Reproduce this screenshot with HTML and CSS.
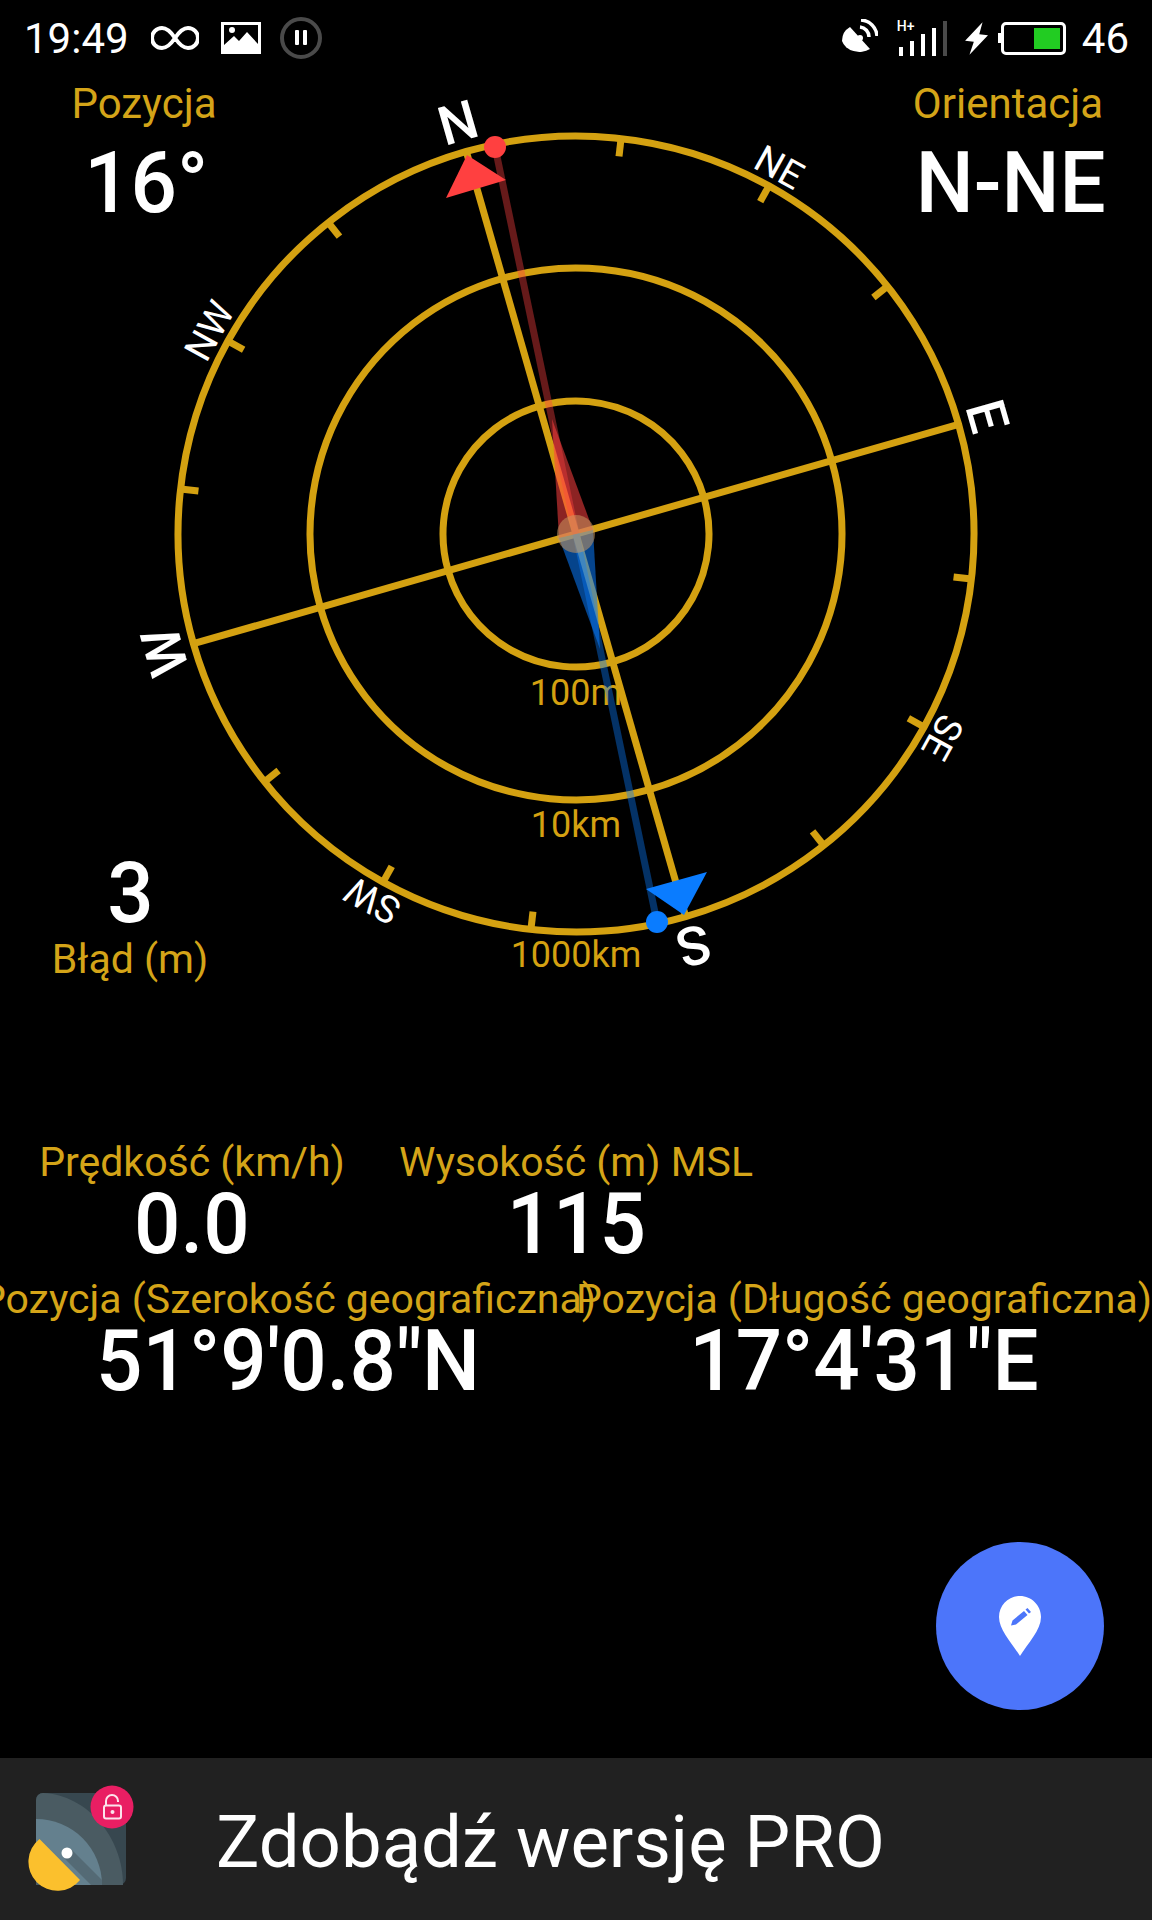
FILE: index.html
```html
<!DOCTYPE html>
<html lang="pl">
<head>
    <meta charset="UTF-8">
    <meta name="viewport" content="width=device-width, initial-scale=1.0">
    <title>Kompas GPS</title>
    <link rel="stylesheet" href="styles.css">
</head>
<body>
<div class="screen">

    <!-- compass dial, drawn in screen coordinates, centre 576,534 -->
    <svg class="compass" viewBox="0 0 1152 1000" width="1152" height="1000">
        <g class="dial" transform="rotate(-16 576 534)">
            <circle cx="576" cy="534" r="398"/>
            <circle cx="576" cy="534" r="266"/>
            <circle cx="576" cy="534" r="133"/>
            <line x1="576" y1="136" x2="576" y2="932"/>
            <line x1="178" y1="534" x2="974" y2="534"/>
            <g id="ticks"></g>
            <g class="dir-big">
                <text x="576" y="125">N</text>
                <text x="576" y="125" transform="rotate(90 576 534)">E</text>
                <text x="576" y="125" transform="rotate(180 576 534)">S</text>
                <text x="576" y="125" transform="rotate(270 576 534)">W</text>
            </g>
            <g class="dir-small">
                <text x="576" y="128" transform="rotate(45 576 534)">NE</text>
                <text x="576" y="128" transform="rotate(135 576 534)">SE</text>
                <text x="576" y="128" transform="rotate(225 576 534)">SW</text>
                <text x="576" y="128" transform="rotate(315 576 534)">NW</text>
            </g>
        </g>
        <g class="scale">
            <text x="576" y="705">100m</text>
            <text x="576" y="837">10km</text>
            <text x="576" y="967">1000km</text>
        </g>
        <!-- gps needle -->
        <line class="needle-red" x1="495" y1="147" x2="576" y2="534"/>
        <line class="needle-blue" x1="657" y1="922" x2="576" y2="534"/>
        <polygon class="wedge-red" points="552,419 559,538 593,530"/>
        <polygon class="wedge-blue" points="600,649 593,530 559,538"/>
        <circle class="hub" cx="576" cy="534" r="19"/>
        <circle class="dot-red" cx="495" cy="147" r="11"/>
        <circle class="dot-blue" cx="657" cy="922" r="11"/>
        <polygon class="dot-red" points="467,155 506,180 446,198"/>
        <polygon class="dot-blue" points="646,889 707,872 684,915"/>
    </svg>

    <div class="statusbar">
        <div class="status-left">
            <span class="clock">19:49</span>
            <svg class="icon-inf" viewBox="0 0 48 24" width="48" height="24">
                <path d="M24 12C20 6 16 2 11 2a10 10 0 0 0 0 20c5 0 9-4 13-10s8-10 13-10a10 10 0 0 1 0 20c-5 0-9-4-13-10z"/>
            </svg>
            <svg class="icon-pic" viewBox="0 0 40 32" width="40" height="32">
                <path fill-rule="evenodd" d="M0 0h40v32H0zM3 3v20l10-9 5 5 8-9 11 12V3z"/>
                <circle cx="11" cy="8" r="3"/>
            </svg>
            <svg class="icon-pause" viewBox="0 0 42 42" width="42" height="42">
                <circle cx="21" cy="21" r="19"/>
                <rect x="15" y="13" width="4" height="15" rx="1"/>
                <rect x="23" y="13" width="4" height="15" rx="1"/>
            </svg>
        </div>
        <div class="status-right">
            <svg class="icon-sat" viewBox="0 0 38 38" width="38" height="38">
                <path d="M10 8 30 30A18 15 0 0 1 2 22 16 16 0 0 1 10 8z"/>
                <path class="sat-wave" d="M20 8a10 10 0 0 1 9 10M21 1a17 17 0 0 1 16 16"/>
                <circle cx="20" cy="19" r="3"/>
            </svg>
            <div class="signal">
                <span class="hplus">H+</span>
                <i class="bar b1"></i>
                <i class="bar b2"></i>
                <i class="bar b3"></i>
                <i class="bar b4"></i>
                <i class="bar b5"></i>
            </div>
            <svg class="icon-bolt" viewBox="0 0 22 30" width="24" height="33">
                <path d="M17 0 1 17l8 1-4 12L22 12l-8-1z"/>
            </svg>
            <div class="battery"><div class="battery-fill"></div></div>
            <span class="clock">46</span>
        </div>
    </div>

    <div class="heading-row">
        <div class="heading">
            <div class="label">Pozycja</div>
            <div class="value">16°</div>
        </div>
        <div class="heading">
            <div class="label">Orientacja</div>
            <div class="value">N-NE</div>
        </div>
    </div>

    <div class="error-box">
        <div class="value">3</div>
        <div class="label">Błąd (m)</div>
    </div>

    <div class="stats">
        <div class="stat">
            <div class="label">Prędkość (km/h)</div>
            <div class="value">0.0</div>
        </div>
        <div class="stat">
            <div class="label">Wysokość (m) MSL</div>
            <div class="value">115</div>
        </div>
    </div>

    <div class="coords">
        <div class="stat">
            <div class="label">Pozycja (Szerokość geograficzna)</div>
            <div class="value">51°9'0.8"N</div>
        </div>
        <div class="stat">
            <div class="label">Pozycja (Długość geograficzna)</div>
            <div class="value">17°4'31"E</div>
        </div>
    </div>

    <div class="fab-row">
        <div class="fab">
            <svg viewBox="0 0 42 60" width="42" height="60">
                <path fill="#fff" d="M21 0C9.400 0 0 9.400 0 21c0 13 13 26 21 39 8-13 21-26 21-39C42 9.400 32.600 0 21 0z"/>
                <path fill="#4c75fa" d="M12 29.500l1.500-5L25 15l3.500 4L17 28.500zM26.500 13.500l2-1.600 3.500 4-2 1.600z"/>
            </svg>
        </div>
    </div>

    <div class="promo">
        <svg class="promo-icon" viewBox="0 0 140 130" width="140" height="130">
            <rect x="36" y="27" width="90" height="92" rx="7" fill="#37474f"/>
            <path d="M36 34a7 7 0 0 1 7-7c44 2 80 44 80 92H36z" fill="#4a5b62"/>
            <path d="M36 53A66 66 0 0 1 102 119H43a7 7 0 0 1-7-7z" fill="#64808e"/>
            <path d="M63 91l8-8 31 31v5H91z" fill="#546a75"/>
            <path d="M39.500 73 80 114A29 29 0 1 1 39.500 73z" fill="#fbc02d"/>
            <circle cx="67" cy="87" r="5.500" fill="#fff"/>
            <circle cx="112" cy="41" r="21.500" fill="#e91e63"/>
            <path d="M106 39v-4a6 6 0 0 1 12 0v1" fill="none" stroke="#fce4ec" stroke-width="2"/>
            <rect x="104" y="39.500" width="17" height="13" rx="2" fill="none" stroke="#fce4ec" stroke-width="2"/>
            <circle cx="112.500" cy="46" r="2" fill="#fce4ec"/>
        </svg>
        <span class="promo-text">Zdobądź wersję PRO</span>
    </div>
</div>

<script>
    // tick marks every 22.5 degrees, cardinal points have none
    var ticks = document.getElementById("ticks");
    for (var i = 0; i < 16; i++) {
        if (i % 4 === 0) continue;
        var tick = document.createElementNS("http://www.w3.org/2000/svg", "line");
        tick.setAttribute("x1", 576);
        tick.setAttribute("y1", 136);
        tick.setAttribute("x2", 576);
        tick.setAttribute("y2", 154);
        tick.setAttribute("transform", "rotate(" + (i * 22.5) + " 576 534)");
        ticks.appendChild(tick);
    }
</script>
</body>
</html>
```

FILE: styles.css
```css
html {
    margin: 0px;
}
body {
    margin: 0px;
    background-color: #000000;
    font-family: "Roboto", "Liberation Sans", sans-serif;
}
.screen {
    position: relative;
    display: flex;
    flex-direction: column;
    width: 1152px;
    height: 1920px;
    overflow: hidden;
    background-color: #000000;
    color: #ffffff;
}

/* compass */
.compass {
    position: absolute;
    left: 0;
    top: 0;
}
.dial circle {
    fill: none;
    stroke: #d4a111;
    stroke-width: 7;
}
.dial line {
    stroke: #d4a111;
    stroke-width: 7;
}
.dir-big text {
    fill: #ffffff;
    font-size: 54px;
    font-weight: 500;
    text-anchor: middle;
}
.dir-small text {
    fill: #ffffff;
    font-size: 38px;
    text-anchor: middle;
}
.scale text {
    fill: #d4a111;
    font-size: 36px;
    text-anchor: middle;
}
.needle-red {
    stroke: #ff4040;
    stroke-opacity: 0.4;
    stroke-width: 7;
}
.needle-blue {
    stroke: #0a7cff;
    stroke-opacity: 0.4;
    stroke-width: 7;
}
.wedge-red {
    fill: #ff4040;
    fill-opacity: 0.55;
}
.wedge-blue {
    fill: #0a7cff;
    fill-opacity: 0.55;
}
.hub {
    fill: #c89860;
    fill-opacity: 0.55;
}
.dot-red {
    fill: #ff4040;
}
.dot-blue {
    fill: #0a7cff;
}

/* status bar */
.statusbar {
    display: flex;
    justify-content: space-between;
    align-items: center;
    height: 80px;
    padding: 0px 23px 4px 24px;
    box-sizing: border-box;
    flex: none;
}
.status-left, .status-right {
    display: flex;
    align-items: center;
}
.clock {
    font-size: 42px;
}
.icon-inf {
    margin-left: 22px;
    fill: none;
    stroke: #ffffff;
    stroke-width: 4;
}
.icon-pic {
    margin-left: 22px;
    fill: #ffffff;
}
.icon-pause {
    margin-left: 19px;
    fill: #ffffff;
}
.icon-pause circle {
    fill: none;
    stroke: #4a4a4a;
    stroke-width: 4;
}
.icon-sat {
    fill: #ffffff;
}
.sat-wave {
    fill: none;
    stroke: #ffffff;
    stroke-width: 3.5;
}
.signal {
    position: relative;
    display: flex;
    align-items: flex-end;
    gap: 7px;
    height: 35px;
    margin-left: 21px;
}
.hplus {
    position: absolute;
    left: -2px;
    top: -2px;
    font-size: 14px;
    font-weight: 500;
    line-height: 14px;
}
.bar {
    display: block;
    width: 4px;
    background-color: #ffffff;
}
.b1 { height: 9px; }
.b2 { height: 15px; }
.b3 { height: 22px; }
.b4 { height: 28px; }
.b5 { height: 35px; background-color: #4a4a4a; }
.icon-bolt {
    margin-left: 17px;
    fill: #ffffff;
}
.battery {
    position: relative;
    display: flex;
    justify-content: flex-end;
    width: 65px;
    height: 33px;
    margin-left: 13px;
    padding: 3px;
    box-sizing: border-box;
    border: 3px solid #ffffff;
    border-radius: 5px;
}
.battery::before {
    content: "";
    position: absolute;
    left: -6px;
    top: 8px;
    width: 3px;
    height: 10px;
    background-color: #ffffff;
}
.battery-fill {
    width: 26px;
    background-color: #22cc22;
}
.status-right .clock {
    margin-left: 16px;
}

/* readouts */
.label {
    font-size: 41px;
    line-height: 48px;
    color: #d4a418;
    white-space: nowrap;
}
.value {
    font-size: 86px;
    font-weight: 500;
    line-height: 80px;
    white-space: nowrap;
    transform: scaleX(0.95);
}
.heading-row {
    display: flex;
    justify-content: space-between;
    flex: none;
}
.heading {
    display: flex;
    flex-direction: column;
    align-items: center;
    width: 288px;
}
.heading .label {
    font-size: 42px;
}
.heading .value {
    margin-top: 15px;
    padding-left: 5px;
}
.error-box {
    display: flex;
    flex-direction: column;
    align-items: center;
    width: 260px;
    margin-top: 630px;
    flex: none;
}
.error-box .label {
    margin-top: 2px;
}
.stats {
    display: grid;
    grid-template-columns: 384px 384px 384px;
    margin-top: 155px;
    flex: none;
}
.coords {
    display: grid;
    grid-template-columns: 576px 576px;
    margin-top: 11px;
    flex: none;
}
.stat {
    display: flex;
    flex-direction: column;
    align-items: center;
    min-width: 0;
}
.stat .value {
    margin-top: -2px;
}

/* map pin button */
.fab-row {
    display: flex;
    justify-content: flex-end;
    padding-right: 48px;
    margin-top: 141px;
    flex: none;
}
.fab {
    display: flex;
    align-items: center;
    justify-content: center;
    width: 168px;
    height: 168px;
    border-radius: 50%;
    background-color: #4c75fa;
}

/* bottom banner */
.promo {
    display: flex;
    align-items: center;
    height: 162px;
    margin-top: auto;
    background-color: #212121;
    flex: none;
}
.promo-icon {
    flex: none;
    align-self: flex-start;
    margin-top: 8px;
}
.promo-text {
    margin-left: 76px;
    padding-top: 7px;
    font-size: 72.500px;
}
```
